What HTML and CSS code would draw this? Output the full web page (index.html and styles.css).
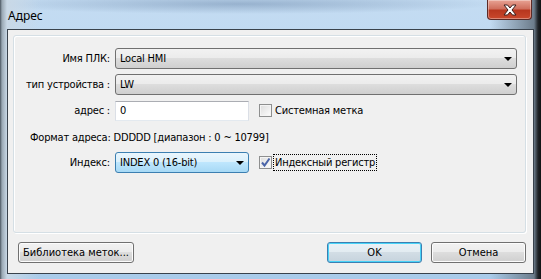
FILE: index.html
```html
<!DOCTYPE html>
<html>
	<head>
		<meta charset="utf-8" />
		<title>Адрес</title>
		<link rel="stylesheet" href="styles.css">
	</head>
	<body>
		<div class="window">
			<div class="titlebar">
				<span class="title">Адрес</span>
				<div class="close">
					<svg width="16" height="12" viewBox="0 0 16 12">
						<path d="M2 1 L5.5 1 L8 4 L10.5 1 L14 1 L10 6 L14 11 L10.5 11 L8 8 L5.5 11 L2 11 L6 6 Z" fill="#fff" stroke="#3a1f1c" stroke-width="1" stroke-linejoin="round"/>
					</svg>
				</div>
			</div>
			<div class="client">
				<div class="panel">
					<div class="form">
						<label class="caption">Имя ПЛК:</label>
						<div class="combo">Local HMI<span class="arrow"></span></div>

						<label class="caption">тип устройства :</label>
						<div class="combo">LW<span class="arrow"></span></div>

						<label class="caption">адрес :</label>
						<div class="line">
							<div class="textbox">0</div>
							<span class="check"></span>
							<span class="check-text">Системная метка</span>
						</div>

						<div class="format">Формат адреса: DDDDD [диапазон : 0 ~ 10799]</div>

						<label class="caption">Индекс:</label>
						<div class="line">
							<div class="combo small focused">INDEX 0 (16-bit)<span class="arrow"></span></div>
							<span class="check">
								<svg width="13" height="13" viewBox="0 0 13 13">
									<path d="M3 6.5 L5.5 9.5 L10.5 2.5" fill="none" stroke="#4a64a8" stroke-width="2"/>
								</svg>
							</span>
							<span class="check-text focus">Индексный регистр</span>
						</div>
					</div>
				</div>
				<div class="buttons">
					<button class="btn lib">Библиотека меток...</button>
					<span class="spacer"></span>
					<button class="btn default">OK</button>
					<button class="btn">Отмена</button>
				</div>
			</div>
		</div>
	</body>
</html>
```
FILE: styles.css
```css
body {
	margin: 0;
	font-family: "DejaVu Sans Condensed", "Liberation Sans", sans-serif;
	font-size: 11px;
	letter-spacing: -0.2px;
	color: #000;
}
.window {
	width: 541px;
	height: 279px;
	display: flex;
	flex-direction: column;
	background:
		linear-gradient(to right, #4a5560 0, #9aa8b4 2px, #c9d8e6 7px, rgba(0,0,0,0) 40px, rgba(0,0,0,0) 490px, #6d7d8c 534px, #202428 538px, #101214 541px),
		radial-gradient(ellipse 260px 10px at 240px 4px, rgba(70,100,140,0.35), rgba(0,0,0,0)),
		linear-gradient(to bottom, #c4dcf2 0, #b9d5f0 40%, #a9cbea 100%);
	overflow: hidden;
}
.titlebar {
	height: 29px;
	display: flex;
	align-items: flex-start;
}
.title {
	font-family: "Noto Sans", "Open Sans", sans-serif;
	font-size: 12px;
	letter-spacing: 0;
	padding: 7px 0 0 8px;
}
.close {
	margin-left: auto;
	margin-right: 9px;
	width: 43px;
	height: 19px;
	border: 1px solid #5c2a26;
	border-top: 0;
	border-radius: 0 0 4px 4px;
	background: linear-gradient(to bottom, #e8a394 0, #d0705e 45%, #b8371f 55%, #c9482c 100%);
	box-shadow: inset 0 0 0 1px rgba(255,255,255,0.35);
	display: flex;
	align-items: center;
	justify-content: center;
}
.client {
	margin: 0 7px;
	height: 245px;
	box-sizing: border-box;
	border: 1px solid #39424c;
	background: #f0f0f0;
	display: flex;
	flex-direction: column;
}
.panel {
	margin: 5px 7px 0 5px;
	height: 198px;
	box-sizing: border-box;
	border: 1px solid #d5dfe5;
	border-radius: 3px;
	box-shadow: inset 1px 1px #fff, 1px 1px #fff;
	padding: 12px 8px 0 0;
}
.form {
	display: grid;
	grid-template-columns: 96px 1fr;
	column-gap: 5px;
	row-gap: 5px;
	grid-auto-rows: 21px;
	align-items: center;
}
.caption {
	text-align: right;
}
.format {
	grid-column: 1 / -1;
	padding-left: 16px;
	margin-top: 2px;
}
.combo {
	position: relative;
	height: 21px;
	box-sizing: border-box;
	border: 1px solid #707070;
	border-radius: 3px;
	background: linear-gradient(to bottom, #f2f2f2 0, #ebebeb 50%, #dddddd 50%, #cfcfcf 100%);
	padding-left: 4px;
	line-height: 19px;
}
.combo.small {
	width: 134px;
}
.combo.focused {
	border-color: #3c7fb1;
	background: linear-gradient(to bottom, #eaf6fd 0, #d9f0fc 50%, #bee6fd 50%, #a7d9f5 100%);
}
.arrow {
	position: absolute;
	right: 4px;
	top: 8px;
	border-left: 4px solid transparent;
	border-right: 4px solid transparent;
	border-top: 4px solid #000;
}
.line {
	display: flex;
	align-items: center;
}
.textbox {
	width: 134px;
	height: 20px;
	box-sizing: border-box;
	background: #fff;
	border: 1px solid #dbdfe6;
	border-top-color: #abadb3;
	border-bottom-color: #e3e9ef;
	padding-left: 4px;
	line-height: 18px;
}
.check {
	width: 13px;
	height: 13px;
	box-sizing: border-box;
	margin-left: 10px;
	border: 1px solid #8e8f8f;
	background: linear-gradient(135deg, #dcdcdc, #fdfdfd);
	box-shadow: inset 0 0 0 1px #f4f4f4;
	position: relative;
}
.check svg {
	position: absolute;
	left: -1px;
	top: -1px;
}
.check-text {
	margin-left: 2px;
	padding: 1px 1px;
}
.check-text.focus {
	outline: 1px dotted #000;
}
.buttons {
	display: flex;
	gap: 9px;
	margin: 9px 7px 0 10px;
}
.spacer {
	flex: 1;
}
.btn {
	font: inherit;
	height: 21px;
	width: 95px;
	padding: 0;
	border: 1px solid #707070;
	border-radius: 3px;
	background: linear-gradient(to bottom, #f2f2f2 0, #ebebeb 50%, #dddddd 50%, #cfcfcf 100%);
	box-shadow: inset 0 0 0 1px #fcfcfc;
	color: #000;
}
.btn.lib {
	width: 116px;
}
.btn.default {
	border-color: #3c7fb1;
	box-shadow: inset 0 0 0 1px #48d3f8;
	background: linear-gradient(to bottom, #eaf1f6 0, #e2ebf1 50%, #d2dde5 50%, #c6d3dd 100%);
}
```
